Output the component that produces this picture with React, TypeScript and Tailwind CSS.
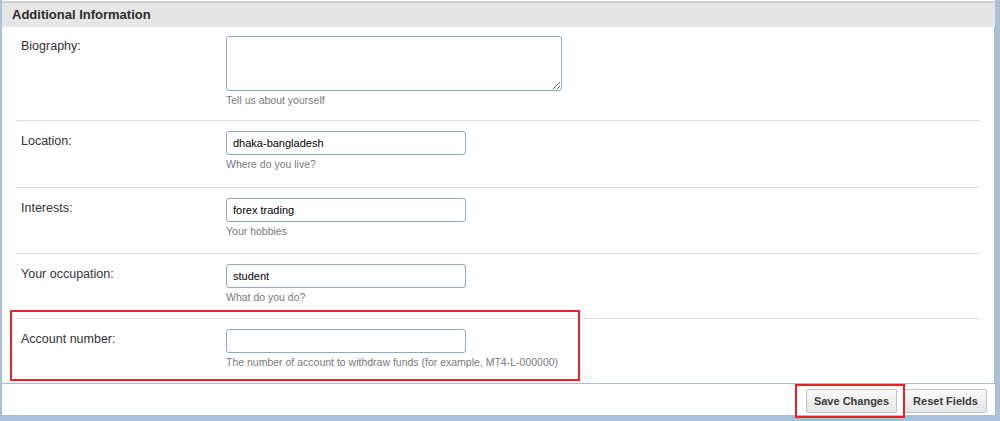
import { FC } from 'react'

interface FieldRowProps {
    label: string;
    value?: string;
    hint: string;
    height: string;
    multiline?: boolean;
    last?: boolean;
}

const FieldRow: FC<FieldRowProps> = ({ label, value, hint, height, multiline, last }) => {
    return (
        <div className={`flex px-[5px] ${height} ${multiline ? 'pt-[9px]' : 'pt-[10px]'} ${last ? '' : 'border-b border-[#d5e0ea]'}`}>
            <div className='w-[205px] shrink-0 pt-[3px] text-[12.5px] leading-[14px] text-[#333333]'>
                {label}
            </div>
            <div className='flex flex-col'>
                {multiline ? (
                    <textarea
                        readOnly
                        className='w-[336px] h-[55px] rounded-[3px] border border-[#8fa7bf] bg-white px-[4px] py-[3px] text-[11px] resize-y'
                    />
                ) : (
                    <input
                        readOnly
                        defaultValue={value}
                        className='w-[240px] h-[24px] rounded-[3px] border border-[#8fa7bf] bg-white px-[6px] text-[11px] text-black outline-none'
                    />
                )}
                <div className='mt-[2px] text-[10.5px] leading-[14px] text-[#7a7a7a]'>{hint}</div>
            </div>
        </div>
    )
}

const App: FC = () => {
    return (
        <div
            className='relative flex w-[1000px] h-[421px] bg-[#a8c0da] overflow-hidden'
            style={{ fontFamily: '"Liberation Sans", Arial, sans-serif' }}
        >
            <div className='ml-[2px] w-[993px] h-[415px] flex flex-col bg-white'>
                <div className='mt-[1px] h-[26px] shrink-0 flex items-center border-t-2 border-[#cfcfcf] bg-[#e6e6e6] px-[10px] text-[13px] font-bold text-[#2d2d2d]'>
                    Additional Information
                </div>

                <div className='border-r border-b border-[#a9bccf]'>
                    <div className='ml-[14px] w-[964px]'>
                        <FieldRow label='Biography:' hint='Tell us about yourself' height='h-[94px]' multiline />
                        <FieldRow label='Location:' value='dhaka-bangladesh' hint='Where do you live?' height='h-[67px]' />
                        <FieldRow label='Interests:' value='forex trading' hint='Your hobbies' height='h-[66px]' />
                        <FieldRow label='Your occupation:' value='student' hint='What do you do?' height='h-[65px]' />
                        <FieldRow label='Account number:' value='' hint='The number of account to withdraw funds (for example, MT4-L-000000)' height='h-[64px]' last />
                    </div>
                </div>

                <div className='flex flex-1 justify-end gap-[7px] pt-[5px] pr-[8px]'>
                    <button className='h-[24px] w-[91px] rounded-[2px] border border-[#c4c4c4] bg-gradient-to-b from-[#fbfbfb] to-[#e4e4e4] text-[11px] font-bold text-[#3a3a3a]'>
                        Save Changes
                    </button>
                    <button className='h-[24px] w-[83px] rounded-[2px] border border-[#c4c4c4] bg-gradient-to-b from-[#fbfbfb] to-[#e4e4e4] text-[11px] font-bold text-[#3a3a3a]'>
                        Reset Fields
                    </button>
                </div>
            </div>

            {/* annotation boxes */}
            <div className='absolute left-[10px] top-[310px] w-[570px] h-[71px] border-2 border-[#e8212b]' />
            <div className='absolute left-[795px] top-[384px] w-[110px] h-[34px] border-2 border-[#e8212b]' />
        </div>
    )
}

export default App
